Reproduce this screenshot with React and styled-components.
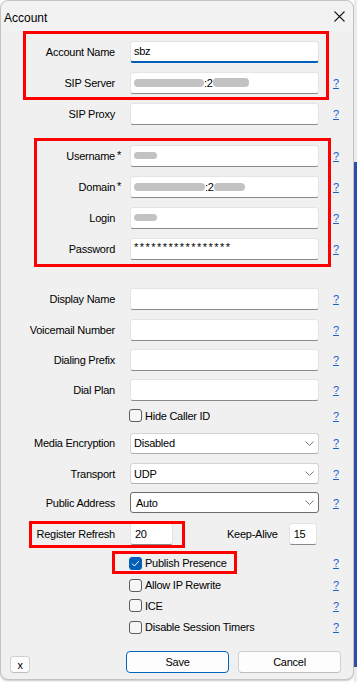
import React from "react";
import styled, { createGlobalStyle, css } from "styled-components";

const Global = createGlobalStyle`
  html, body { margin: 0; padding: 0; background: #ffffff; }
  body {
    font-family: "Liberation Sans", Arial, sans-serif;
    font-size: 11px;
    letter-spacing: -0.25px;
    color: #000;
  }
`;

const Page = styled.div`
  display: flex;
  width: 357px;
  height: 682px;
  overflow: hidden;
`;

const Dialog = styled.div`
  box-sizing: border-box;
  width: 354px;
  height: 680px;
  flex: none;
  display: flex;
  flex-direction: column;
  background: #f0f0f0;
  border: 1px solid #c3c3c3;
  border-radius: 8px;
  box-shadow: 0 1px 2px rgba(0, 0, 0, 0.22);
`;

const Strip = styled.div`
  flex: 1;
  padding-top: 162px;
  background: #ececec;
  div {
    height: 505px;
    background: #2b4fa6;
  }
`;

const TitleBar = styled.div`
  height: 30px;
  display: flex;
  align-items: center;
  justify-content: space-between;
  padding: 0 8px 0 3px;
  border-radius: 8px 8px 0 0;
  background: #f2f2f2;
`;

const Title = styled.span`
  font-size: 12px;
  letter-spacing: 0;
  margin-top: 3px;
`;

const Body = styled.div`
  padding-top: 5px;
  display: flex;
  flex-direction: column;
`;

const Section = styled.div`
  position: relative;
  margin-top: ${(p) => p.$mt || 0}px;
`;

const Highlight = styled.div`
  position: absolute;
  box-sizing: border-box;
  border: 3px solid #ff0000;
  pointer-events: none;
  top: ${(p) => p.$t}px;
  left: ${(p) => p.$l}px;
  width: ${(p) => p.$w}px;
  height: ${(p) => p.$h}px;
`;

const Row = styled.div`
  position: relative;
  display: grid;
  grid-template-columns: 115px 189px auto;
  column-gap: 14px;
  align-items: center;
  height: ${(p) => p.$h || 31}px;
`;

const Label = styled.span`
  text-align: right;
  white-space: nowrap;
  padding-right: 1px;
  position: relative;
`;

const Req = styled.span`
  position: absolute;
  left: 100%;
  margin-left: 1px;
  top: -1px;
`;

const Field = styled.div`
  box-sizing: border-box;
  height: 22px;
  display: flex;
  align-items: center;
  padding: 0 3px;
  background: #ffffff;
  border: 1px solid #e4e4e4;
  border-bottom-color: #8a8a8a;
  border-radius: 3px;
  white-space: nowrap;
  overflow: hidden;
  ${(p) =>
    p.$focus &&
    css`
      border-bottom: 2px solid #005fb8;
    `}
  ${(p) =>
    p.$secret &&
    css`
      letter-spacing: 1.45px;
      align-items: flex-start;
      padding-top: 2px;
    `}
`;

const Blob = styled.span`
  display: inline-block;
  width: ${(p) => p.$w}px;
  height: ${(p) => p.$hh || 8}px;
  border-radius: 4px;
  background: #c2c2c2;
`;

const Select = styled.div`
  box-sizing: border-box;
  height: 21px;
  display: flex;
  align-items: center;
  justify-content: space-between;
  padding: 0 4px 0 3px;
  background: #ffffff;
  border: 1px solid #d3d3d3;
  border-bottom-color: #b0b0b0;
  border-radius: 3px;
  ${(p) =>
    p.$focus &&
    css`
      border-color: #6c6c6c;
      padding-left: 5px;
    `}
`;

const Help = styled.span`
  color: #1a5fd0;
  text-decoration: underline;
  font-size: 11px;
  width: 6px;
`;

const Check = styled.label`
  display: flex;
  align-items: center;
  gap: 3px;
  margin-left: -1px;
  white-space: nowrap;
`;

const Box = styled.span`
  box-sizing: border-box;
  width: 13px;
  height: 13px;
  border-radius: 3px;
  border: 1px solid #5c5c5c;
  background: #f6f6f6;
  display: flex;
  align-items: center;
  justify-content: center;
  ${(p) =>
    p.$on &&
    css`
      border-color: #005fb8;
      background: #005fb8;
    `}
`;

const Inline = styled.div`
  display: flex;
  align-items: center;
`;

const Small = styled(Field)`
  width: ${(p) => p.$w}px;
  padding-left: 4px;
`;

const KeepLabel = styled.span`
  margin-left: 54px;
  margin-right: 11px;
  white-space: nowrap;
`;

const Footer = styled.div`
  flex: 1;
  display: flex;
  align-items: flex-end;
  padding: 0 11px 6px 9px;
`;

const Button = styled.button`
  box-sizing: border-box;
  font: inherit;
  letter-spacing: -0.25px;
  color: #000;
  background: #fdfdfd;
  border: 1px solid #d0d0d0;
  border-bottom-color: #bdbdbd;
  border-radius: 4px;
  height: ${(p) => p.$h || 22}px;
  width: ${(p) => p.$w}px;
  margin-left: ${(p) => p.$ml || 0}px;
  padding: 0;
  ${(p) =>
    p.$primary &&
    css`
      border: 1px solid #0067c0;
    `}
`;

const Chevron = () => (
  <svg width="9" height="5" viewBox="0 0 9 5">
    <path d="M0.5 0.5 L4.5 4.5 L8.5 0.5" fill="none" stroke="#666" strokeWidth="0.9" />
  </svg>
);

const Tick = () => (
  <svg width="9" height="7" viewBox="0 0 9 7">
    <path d="M1 3.6 L3.4 6 L8 1" fill="none" stroke="#ffffff" strokeWidth="1" />
  </svg>
);

const CloseIcon = () => (
  <svg width="11" height="11" viewBox="0 0 11 11">
    <path d="M0.5 0.5 L10.5 10.5 M10.5 0.5 L0.5 10.5" stroke="#1a1a1a" strokeWidth="1.1" />
  </svg>
);

function TextRow({ label, req, h, children, help = true, focus, secret }) {
  return (
    <Row $h={h}>
      <Label>
        {label}
        {req && <Req>*</Req>}
      </Label>
      <Field $focus={focus} $secret={secret}>
        {children}
      </Field>
      {help ? <Help>?</Help> : <span />}
    </Row>
  );
}

function SelectRow({ label, value, h, focus }) {
  return (
    <Row $h={h}>
      <Label>{label}</Label>
      <Select $focus={focus}>
        <span>{value}</span>
        <Chevron />
      </Select>
      <Help>?</Help>
    </Row>
  );
}

function CheckRow({ label, on, h, children }) {
  return (
    <Row $h={h}>
      <span />
      <Check>
        <Box $on={on}>{on && <Tick />}</Box>
        {label}
      </Check>
      <Help>?</Help>
      {children}
    </Row>
  );
}

export default function App() {
  return (
    <>
      <Global />
      <Page>
        <Dialog>
          <TitleBar>
            <Title>Account</Title>
            <CloseIcon />
          </TitleBar>
          <Body>
            <Section>
              <Highlight $t={-5} $l={22} $w={306} $h={69} />
              <TextRow label="Account Name" help={false} focus>
                sbz
              </TextRow>
              <TextRow label="SIP Server">
                <Blob $w={70} />
                <span>:2</span>
                <Blob $w={36} $hh={9} />
              </TextRow>
            </Section>
            <TextRow label="SIP Proxy" />
            <Section $mt={11}>
              <Highlight $t={-2} $l={33} $w={297} $h={129} />
              <TextRow label="Username" req>
                <Blob $w={23} $hh={7} />
              </TextRow>
              <TextRow label="Domain" req>
                <Blob $w={71} />
                <span>:2</span>
                <Blob $w={31} />
              </TextRow>
              <TextRow label="Login">
                <Blob $w={23} $hh={7} />
              </TextRow>
              <TextRow label="Password" secret>
                *****************
              </TextRow>
            </Section>
            <Section $mt={19}>
              <TextRow label="Display Name" />
              <TextRow label="Voicemail Number" />
              <TextRow label="Dialing Prefix" h={30} />
              <TextRow label="Dial Plan" h={29} />
              <CheckRow label="Hide Caller ID" h={23} />
              <SelectRow label="Media Encryption" value="Disabled" h={32} />
              <SelectRow label="Transport" value="UDP" h={29} />
              <SelectRow label="Public Address" value="Auto" h={29} focus />
              <Row $h={34}>
                <Highlight $t={4} $l={28} $w={156} $h={27} />
                <Label>Register Refresh</Label>
                <Inline>
                  <Small $w={43}>20</Small>
                  <KeepLabel>Keep-Alive</KeepLabel>
                  <Small $w={28}>15</Small>
                </Inline>
                <span />
              </Row>
              <CheckRow label="Publish Presence" on h={24}>
                <Highlight $t={0} $l={111} $w={125} $h={23} />
              </CheckRow>
              <CheckRow label="Allow IP Rewrite" h={20} />
              <CheckRow label="ICE" h={21} />
              <CheckRow label="Disable Session Timers" h={22} />
            </Section>
          </Body>
          <Footer>
            <Button $w={20} $h={17}>x</Button>
            <Button $w={103} $ml={96} $primary>
              Save
            </Button>
            <Button $w={103} $ml={9}>
              Cancel
            </Button>
          </Footer>
        </Dialog>
        <Strip>
          <div />
        </Strip>
      </Page>
    </>
  );
}
